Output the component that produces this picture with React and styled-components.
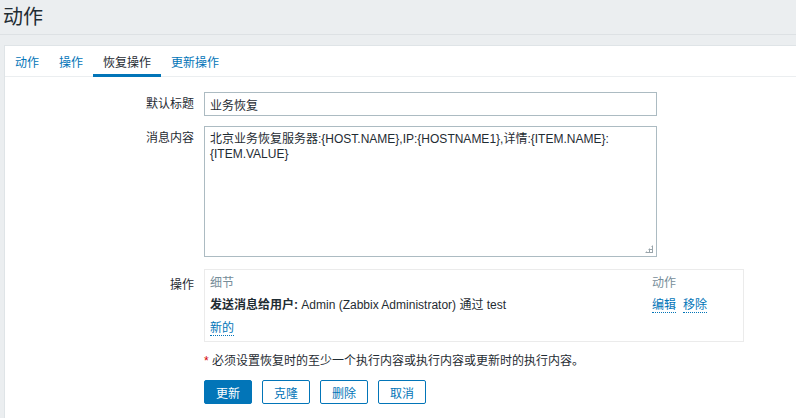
import React from "react";
import styled, { createGlobalStyle } from "styled-components";

const GlobalStyle = createGlobalStyle`
  html, body {
    margin: 0;
    padding: 0;
    background: #ebeef0;
    overflow: hidden;
  }
  body {
    font-family: Arial, "Liberation Sans", "Noto Sans CJK SC", sans-serif;
    font-size: 12px;
    color: #1f2c33;
  }
`;

const Page = styled.div`
  width: 796px;
  height: 418px;
  background: #ebeef0;
`;

const Header = styled.div`
  height: 34px;
  border-bottom: 1px solid #dde1e4;
  margin-bottom: 10px;
  display: flex;
  align-items: center;
  padding-left: 3px;
`;

const Title = styled.h1`
  margin: 0;
  font-size: 20px;
  font-weight: normal;
  line-height: 24px;
  color: #1f2c33;
`;

const Panel = styled.div`
  margin-left: 4px;
  background: #fff;
  border: 1px solid #dfe4e7;
  border-right: none;
  height: 380px;
`;

const Tabs = styled.ul`
  list-style: none;
  margin: 0;
  padding: 0;
  display: flex;
  border-bottom: 1px solid #ebeef0;
  height: 30px;
`;

const Tab = styled.li`
  padding: 0 10px;
  display: flex;
  align-items: center;
  color: ${(p) => (p.$active ? "#1f2c33" : "#0275b8")};
  border-bottom: 3px solid ${(p) => (p.$active ? "#0275b8" : "transparent")};
  margin-bottom: -1px;
  padding-top: 2px;
  box-sizing: border-box;
  cursor: pointer;
`;

const Form = styled.div`
  display: grid;
  grid-template-columns: 189px 1fr;
  column-gap: 10px;
  row-gap: 10px;
  padding-top: 15px;
`;

const Label = styled.div`
  text-align: right;
  padding-top: ${(p) => p.$top || 5}px;
  line-height: 14px;
`;

const Field = styled.div`
  display: flex;
  flex-direction: column;
  margin-top: ${(p) => p.$mt || 0}px;
`;

const TextInput = styled.input`
  width: 453px;
  height: 24px;
  box-sizing: border-box;
  border: 1px solid #acbbc2;
  padding: 0 5px;
  font: inherit;
  color: #1f2c33;
  outline: none;
`;

const AreaWrap = styled.div`
  position: relative;
  width: 453px;
  height: 131px;

  &::after {
    content: "";
    position: absolute;
    right: 4px;
    bottom: 4px;
    width: 8px;
    height: 8px;
    background:
      radial-gradient(circle, #9aa5ab 0 1px, transparent 1.2px) 0 0 / 3px 3px;
    clip-path: polygon(100% 0, 100% 100%, 0 100%);
    pointer-events: none;
  }
`;

const TextArea = styled.textarea`
  width: 100%;
  height: 100%;
  display: block;
  box-sizing: border-box;
  border: 1px solid #acbbc2;
  padding: 5px 5px;
  font: inherit;
  line-height: 15px;
  color: #1f2c33;
  outline: none;
  resize: none;
`;

const OpBox = styled.div`
  width: 540px;
  box-sizing: border-box;
  border: 1px solid #ebebeb;
  padding: 6px 5px 6px;
`;

const OpTable = styled.div`
  display: grid;
  grid-template-columns: 442px 1fr;
  row-gap: 8px;
  line-height: 14px;
`;

const HeadCell = styled.div`
  color: #768d99;
`;

const Cell = styled.div`
  display: flex;
  gap: 7px;
`;

const DotLink = styled.a`
  color: #0275b8;
  text-decoration: none;
  border-bottom: 1px dotted #0275b8;
  cursor: pointer;
`;

const NewRow = styled.div`
  margin-top: 8px;
  line-height: 14px;
`;

const Note = styled.div`
  margin-top: 12px;
  line-height: 14px;
`;

const Star = styled.span`
  color: #d40000;
`;

const Buttons = styled.div`
  display: flex;
  gap: 10px;
  margin-top: 12px;
`;

const Button = styled.button`
  height: 24px;
  min-width: 48px;
  padding: 0 11px;
  box-sizing: border-box;
  font: inherit;
  border: 1px solid #0275b8;
  border-radius: 2px;
  background: ${(p) => (p.$primary ? "#0275b8" : "#fff")};
  color: ${(p) => (p.$primary ? "#fff" : "#0275b8")};
  cursor: pointer;
`;

const tabs = ["动作", "操作", "恢复操作", "更新操作"];

const App = () => {
  return (
    <Page>
      <GlobalStyle />
      <Header>
        <Title>动作</Title>
      </Header>
      <Panel>
        <Tabs>
          {tabs.map((t) => (
            <Tab key={t} $active={t === "恢复操作"}>{t}</Tab>
          ))}
        </Tabs>
        <Form>
          <Label>默认标题</Label>
          <Field>
            <TextInput defaultValue="业务恢复" />
          </Field>

          <Label>消息内容</Label>
          <Field>
            <AreaWrap>
              <TextArea
                readOnly
                defaultValue="北京业务恢复服务器:{HOST.NAME},IP:{HOSTNAME1},详情:{ITEM.NAME}:{ITEM.VALUE}"
              />
            </AreaWrap>
          </Field>

          <Label $top={11}>操作</Label>
          <Field $mt={2}>
            <OpBox>
              <OpTable>
                <HeadCell>细节</HeadCell>
                <HeadCell>动作</HeadCell>
                <div>
                  <b>发送消息给用户:</b> Admin (Zabbix Administrator) 通过 test
                </div>
                <Cell>
                  <DotLink>编辑</DotLink>
                  <DotLink>移除</DotLink>
                </Cell>
              </OpTable>
              <NewRow>
                <DotLink>新的</DotLink>
              </NewRow>
            </OpBox>
            <Note>
              <Star>*</Star> 必须设置恢复时的至少一个执行内容或执行内容或更新时的执行内容。
            </Note>
            <Buttons>
              <Button $primary>更新</Button>
              <Button>克隆</Button>
              <Button>删除</Button>
              <Button>取消</Button>
            </Buttons>
          </Field>
        </Form>
      </Panel>
    </Page>
  );
};

export default App;
